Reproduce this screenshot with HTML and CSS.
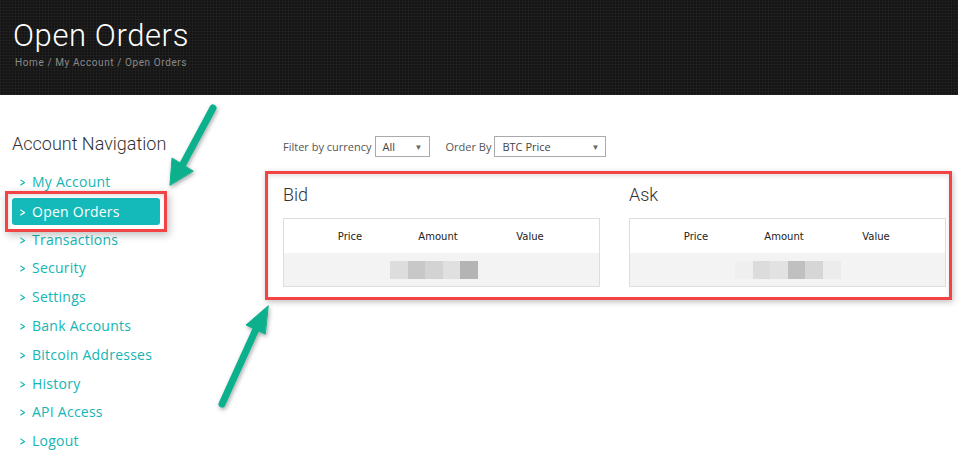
FILE: index.html
```html
<!DOCTYPE html>
<html>
<head>
<meta charset="utf-8">
<link rel="stylesheet" href="styles.css">
</head>
<body>
<header class="hero">
  <h1 class="hero-title">Open Orders</h1>
  <div class="crumbs">Home / My Account / Open Orders</div>
</header>
<main class="page">
  <aside class="side">
    <h2 class="side-title">Account Navigation</h2>
    <ul class="nav">
      <li class="nav-item"><span class="chev">&gt;</span>My Account</li>
      <li class="nav-item active"><span class="chev">&gt;</span>Open Orders</li>
      <li class="nav-item"><span class="chev">&gt;</span>Transactions</li>
      <li class="nav-item"><span class="chev">&gt;</span>Security</li>
      <li class="nav-item"><span class="chev">&gt;</span>Settings</li>
      <li class="nav-item"><span class="chev">&gt;</span>Bank Accounts</li>
      <li class="nav-item"><span class="chev">&gt;</span>Bitcoin Addresses</li>
      <li class="nav-item"><span class="chev">&gt;</span>History</li>
      <li class="nav-item"><span class="chev">&gt;</span>API Access</li>
      <li class="nav-item"><span class="chev">&gt;</span>Logout</li>
    </ul>
  </aside>
  <section class="content">
    <div class="filters">
      <label class="flabel">Filter by currency</label>
      <div class="select sel-cur"><span>All</span><span class="caret">&#9660;</span></div>
      <label class="flabel ob">Order By</label>
      <div class="select sel-order"><span>BTC Price</span><span class="caret">&#9660;</span></div>
    </div>
    <div class="books">
      <div class="book">
        <h3 class="book-title">Bid</h3>
        <div class="tbl">
          <div class="thead"><span>Price</span><span>Amount</span><span>Value</span></div>
          <div class="tbody">
            <div class="pix pix-bid">
              <i style="background:#dddddd"></i><i style="background:#c8c8c8"></i><i style="background:#d3d3d3"></i><i style="background:#e0e0e0"></i><i style="background:#b4b4b4"></i>
            </div>
          </div>
        </div>
      </div>
      <div class="book">
        <h3 class="book-title">Ask</h3>
        <div class="tbl">
          <div class="thead"><span>Price</span><span>Amount</span><span>Value</span></div>
          <div class="tbody">
            <div class="pix pix-ask">
              <i style="background:#efefef"></i><i style="background:#dcdcdc"></i><i style="background:#e2e2e2"></i><i style="background:#c0c0c0"></i><i style="background:#d6d6d6"></i><i style="background:#ececec"></i>
            </div>
          </div>
        </div>
      </div>
    </div>
  </section>
</main>
<svg class="arrows" width="958" height="458" viewBox="0 0 958 458">
  <defs>
    <filter id="sh" x="-50%" y="-50%" width="200%" height="200%">
      <feDropShadow dx="1" dy="2" stdDeviation="2" flood-color="#000" flood-opacity="0.35"/>
    </filter>
  </defs>
  <g filter="url(#sh)" fill="#0db08c" stroke="#0db08c" stroke-linecap="round" stroke-linejoin="round">
    <line x1="213" y1="108" x2="183" y2="164" stroke-width="7"/>
    <polygon points="170,185 172,158 193,171" stroke-width="1"/>
    <line x1="222" y1="404" x2="257" y2="327" stroke-width="7"/>
    <polygon points="268,306 246,325 265,334" stroke-width="1"/>
  </g>
</svg>
</body>
</html>
```
FILE: styles.css
```css
* { box-sizing: border-box; }
html, body { margin: 0; padding: 0; }
body {
  width: 958px;
  height: 458px;
  overflow: hidden;
  background: #fff;
  font-family: "Open Sans", "Liberation Sans", sans-serif;
  position: relative;
}
.hero {
  height: 95px;
  background-color: #151515;
  background-image:
    repeating-linear-gradient(0deg, rgba(255,255,255,0.03) 0 1px, transparent 1px 3px),
    repeating-linear-gradient(90deg, rgba(255,255,255,0.03) 0 1px, transparent 1px 3px);
  padding: 17px 0 0 13px;
}
.hero-title {
  margin: 0;
  font-family: Roboto, "Liberation Sans", sans-serif;
  font-weight: 300;
  font-size: 31px;
  line-height: 38px;
  color: #fff;
  letter-spacing: 0.6px;
}
.crumbs {
  margin: 1px 0 0 2px;
  font-family: Roboto, "Liberation Sans", sans-serif;
  font-size: 10px;
  line-height: 14px;
  color: #8a8a8a;
  letter-spacing: 0.6px;
}
.page {
  display: flex;
  padding: 0 0 0 12px;
}
.side { width: 253px; flex: none; }
.side-title {
  margin: 37px 0 0 0;
  font-family: Roboto, "Liberation Sans", sans-serif;
  font-weight: 300;
  font-size: 18px;
  line-height: 24px;
  color: #333;
}
.nav {
  list-style: none;
  margin: 12px 0 0 0;
  padding: 0;
  width: 148px;
}
.nav-item {
  height: 28.8px;
  line-height: 27px;
  font-size: 14px;
  letter-spacing: 0.25px;
  color: #14b5b5;
  padding-left: 8px;
  white-space: nowrap;
}
.chev {
  display: inline-block;
  width: 12px;
  font-size: 12px;
  font-weight: 700;
  transform: scaleX(0.8);
  transform-origin: left center;
}
.nav-item.active {
  position: relative;
  background: #14b9b9;
  color: #fff;
  border-radius: 3px;
  height: 27px;
  margin: 1px 0 0.8px 0;
}
.nav-item.active::after {
  content: "";
  position: absolute;
  left: -7px;
  top: -7px;
  right: -7px;
  bottom: -7px;
  border: 3px solid #f24444;
  box-shadow: 2px 3px 8px rgba(0,0,0,0.25), inset 1px 2px 4px rgba(0,0,0,0.12);
  pointer-events: none;
}
.content { flex: 1; padding-top: 41px; }
.filters {
  display: flex;
  align-items: center;
  height: 21px;
  padding-left: 18px;
  font-size: 11px;
  color: #555;
}
.flabel { margin-right: 3px; }
.flabel.ob { margin-left: 16px; }
.select {
  height: 21px;
  border: 1px solid #aaa;
  display: flex;
  align-items: center;
  justify-content: space-between;
  padding: 0 6px 0 7px;
  font-size: 11px;
  color: #444;
}
.sel-cur { width: 55px; }
.sel-order { width: 112px; }
.caret { font-size: 8px; color: #666; }
.books {
  margin-top: 14px;
  width: 687px;
  height: 129px;
  border: 3px solid #f24444;
  box-shadow: 1px 2px 6px rgba(0,0,0,0.25), inset 0 2px 4px rgba(0,0,0,0.12);
  display: flex;
  gap: 29px;
  padding: 0 0 0 15px;
}
.book { width: 317px; }
.book-title {
  margin: 8px 0 0 0;
  font-family: Roboto, "Liberation Sans", sans-serif;
  font-weight: 300;
  font-size: 18px;
  line-height: 26px;
  color: #333;
}
.tbl {
  margin-top: 10px;
  border: 1px solid #ddd;
  height: 69px;
}
.thead {
  height: 34px;
  display: grid;
  grid-template-columns: 22px 88px 88px 96px;
  align-items: center;
  font-family: "DejaVu Sans", sans-serif;
  font-size: 10px;
  color: #222;
}
.thead span:nth-child(1) { grid-column: 2; text-align: center; }
.thead span:nth-child(2) { grid-column: 3; text-align: center; }
.thead span:nth-child(3) { grid-column: 4; text-align: center; }
.tbody {
  height: 33px;
  background: #f3f3f3;
  display: flex;
  align-items: center;
}
.pix { display: flex; height: 18px; }
.pix i { display: block; width: 17.6px; height: 18px; }
.pix-bid { margin-left: 106px; }
.pix-ask { margin-left: 105px; }
.arrows {
  position: absolute;
  left: 0;
  top: 0;
  pointer-events: none;
}
```
